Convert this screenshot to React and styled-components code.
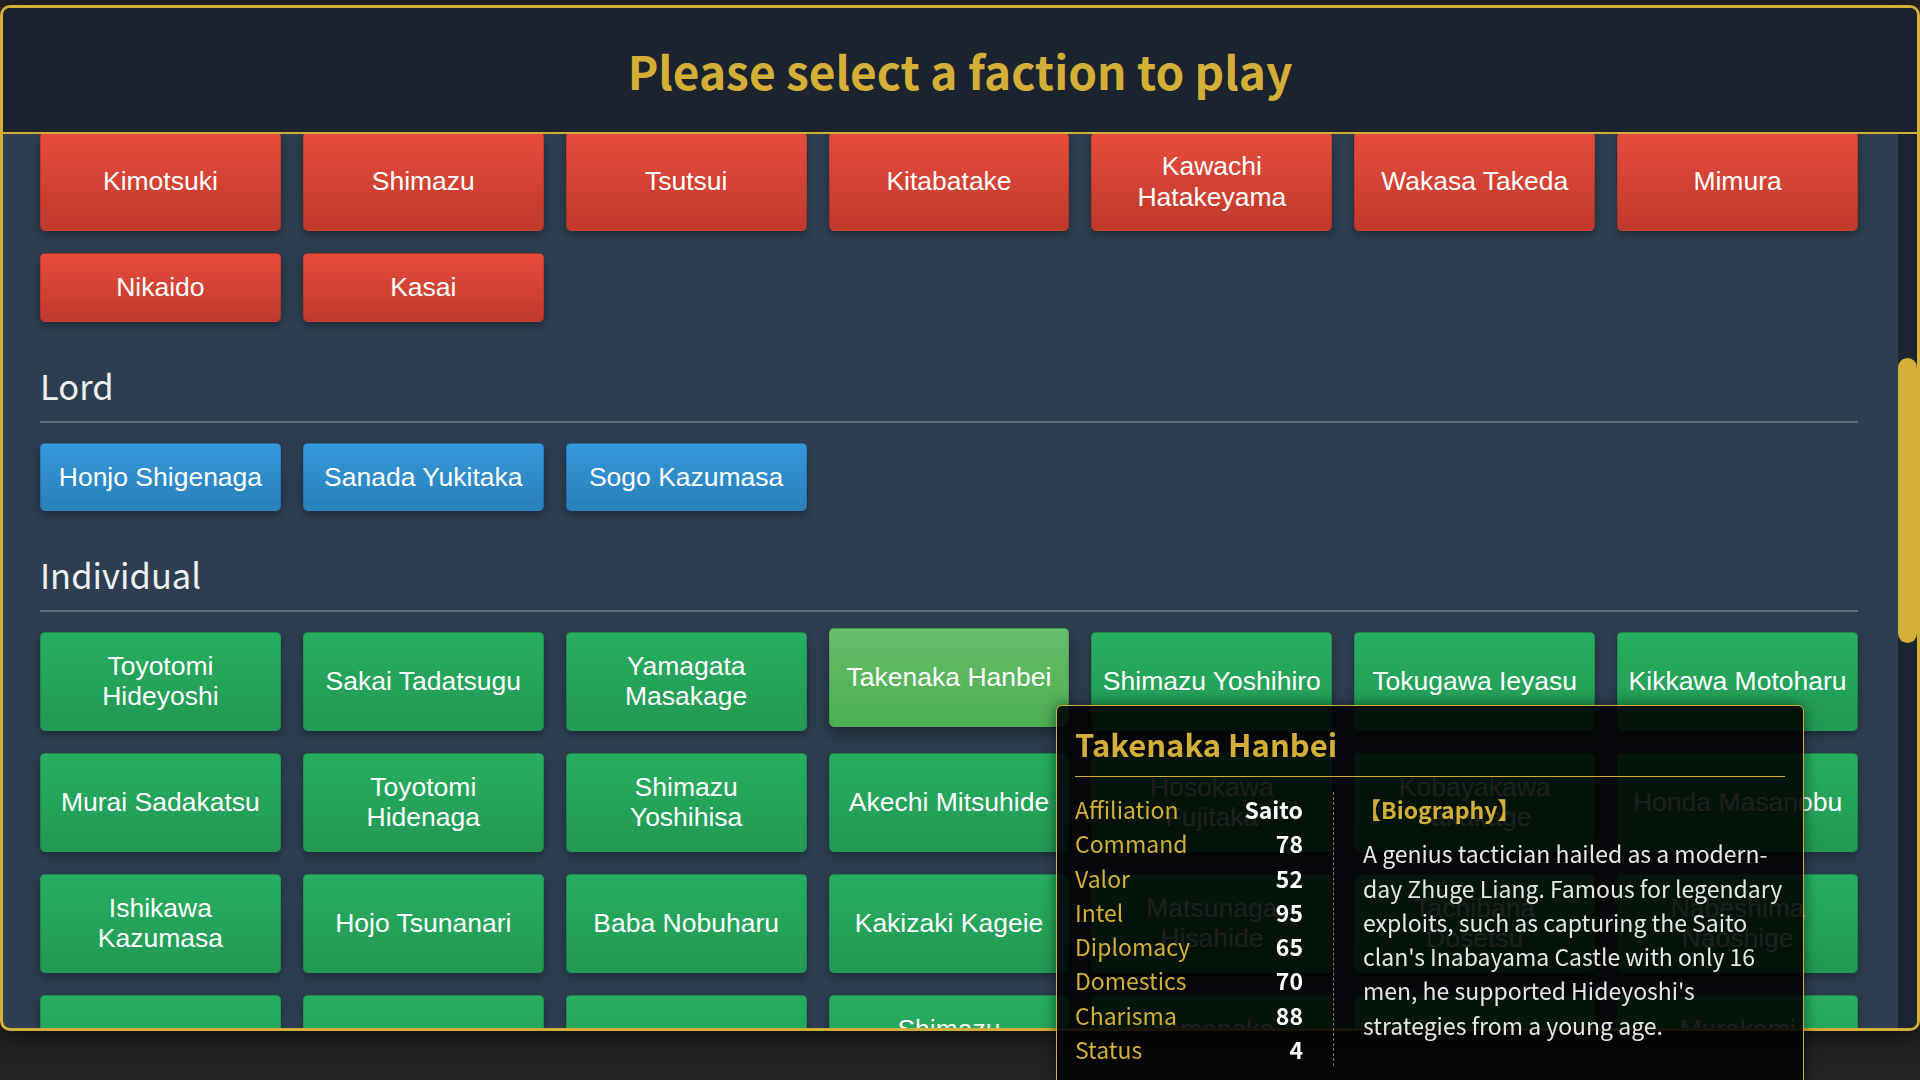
import React, { useLayoutEffect, useRef } from "react";
import styled, { createGlobalStyle, css } from "styled-components";

const GlobalStyle = createGlobalStyle`
  html, body {
    margin: 0;
    padding: 0;
    height: 100%;
    background: #232323;
    overflow: hidden;
  }
  body {
    font-family: "Noto Sans CJK JP", "Noto Sans", sans-serif;
  }
  * {
    box-sizing: border-box;
  }
`;

const hiddenClans = [
  "Oda", "Takeda", "Uesugi", "Hojo", "Mori", "Date", "Imagawa",
  "Tokugawa", "Asai", "Asakura", "Saito", "Rokkaku", "Miyoshi", "Matsunaga",
  "Chosokabe", "Otomo", "Ryuzoji", "Ashikaga", "Satake", "Satomi", "Mogami",
  "Ashina", "Nanbu", "Tsugaru", "Anegakoji", "Jinbo", "Hatano", "Akamatsu",
  "Amago", "Ouchi", "Ito", "Sagara", "Ichijo", "Kono", "Yamana",
];

const shownClans = [
  "Kimotsuki", "Shimazu", "Tsutsui", "Kitabatake", "Kawachi Hatakeyama",
  "Wakasa Takeda", "Mimura", "Nikaido", "Kasai",
];

const lords = ["Honjo Shigenaga", "Sanada Yukitaka", "Sogo Kazumasa"];

const individuals = [
  "Toyotomi Hideyoshi", "Sakai Tadatsugu", "Yamagata Masakage", "Takenaka Hanbei",
  "Shimazu Yoshihiro", "Tokugawa Ieyasu", "Kikkawa Motoharu",
  "Murai Sadakatsu", "Toyotomi Hidenaga", "Shimazu Yoshihisa", "Akechi Mitsuhide",
  "Hosokawa Fujitaka", "Kobayakawa Takakage", "Honda Masanobu",
  "Ishikawa Kazumasa", "Hojo Tsunanari", "Baba Nobuharu", "Kakizaki Kageie",
  "Matsunaga Hisahide", "Tachibana Dosetsu", "Nabeshima Naoshige",
  "Oda Nobunaga", "Takeda Shingen", "Uesugi Kenshin", "Shimazu Toshihisa",
  "Yamanaka Yukimori", "Date Masamune", "Murakami Yoshikiyo",
  "Maeda Toshiie", "Shibata Katsuie", "Niwa Nagahide", "Takigawa Kazumasu",
  "Sassa Narimasa", "Ikeda Tsuneoki", "Mori Nagayoshi",
  "Kato Kiyomasa", "Fukushima Masanori", "Ishida Mitsunari", "Otani Yoshitsugu",
  "Kuroda Kanbei", "Kuroda Nagamasa", "Hachisuka Masakatsu",
  "Sanada Masayuki", "Sanada Nobushige", "Naoe Kanetsugu", "Uesugi Kagekatsu",
  "Amakasu Kagemochi", "Saito Toshimitsu", "Saito Dosan",
];

const stats = [
  ["Affiliation", "Saito"],
  ["Command", "78"],
  ["Valor", "52"],
  ["Intel", "95"],
  ["Diplomacy", "65"],
  ["Domestics", "70"],
  ["Charisma", "88"],
  ["Status", "4"],
];

const gradients = {
  clan: css`
    background: linear-gradient(180deg, #e74c3c 0%, #c0392b 100%);
  `,
  lord: css`
    background: linear-gradient(180deg, #3498db 0%, #2980b9 100%);
  `,
  person: css`
    background: linear-gradient(180deg, #27ae60 0%, #229954 100%);
  `,
};

const App = () => {
  const scrollRef = useRef(null);
  const anchorRef = useRef(null);

  // the list is shown scrolled down to the end of the clan section
  useLayoutEffect(() => {
    if (scrollRef.current && anchorRef.current) {
      scrollRef.current.scrollTop = anchorRef.current.offsetTop + 2;
    }
  }, []);

  return (
    <>
      <GlobalStyle />
      <Frame>
        <Header>
          <Title>Please select a faction to play</Title>
        </Header>
        <Body>
          <Scroller ref={scrollRef}>
            <Section $first>
              <SectionTitle>Daimyo</SectionTitle>
              <Grid>
                {hiddenClans.map((name) => (
                  <FactionButton key={name} $kind="clan">
                    {name}
                  </FactionButton>
                ))}
                {shownClans.map((name, i) => (
                  <FactionButton
                    key={name}
                    $kind="clan"
                    ref={i === 0 ? anchorRef : undefined}
                  >
                    {name}
                  </FactionButton>
                ))}
              </Grid>
            </Section>
            <Section>
              <SectionTitle>Lord</SectionTitle>
              <Grid>
                {lords.map((name) => (
                  <FactionButton key={name} $kind="lord">
                    {name}
                  </FactionButton>
                ))}
              </Grid>
            </Section>
            <Section>
              <SectionTitle>Individual</SectionTitle>
              <Grid>
                {individuals.map((name) => (
                  <FactionButton
                    key={name}
                    $kind="person"
                    $active={name === "Takenaka Hanbei"}
                  >
                    {name}
                  </FactionButton>
                ))}
              </Grid>
            </Section>
          </Scroller>
          <ScrollTrack>
            <ScrollThumb />
          </ScrollTrack>
        </Body>
      </Frame>

      <Tooltip>
        <TipTitle>Takenaka Hanbei</TipTitle>
        <TipBody>
          <Stats>
            {stats.map(([label, value]) => (
              <StatRow key={label}>
                <StatLabel>{label}</StatLabel>
                <StatValue>{value}</StatValue>
              </StatRow>
            ))}
          </Stats>
          <Bio>
            <BioTitle>【Biography】</BioTitle>
            <BioText>
              A genius tactician hailed as a modern-day Zhuge Liang. Famous for
              legendary exploits, such as capturing the Saito clan's Inabayama
              Castle with only 16 men, he supported Hideyoshi's strategies from
              a young age.
            </BioText>
          </Bio>
        </TipBody>
      </Tooltip>
    </>
  );
};

const Frame = styled.div`
  margin-top: 5px;
  width: 1920px;
  height: 1026px;
  border: 3px solid #d4af37;
  border-radius: 10px;
  background: #2c3e50;
  overflow: hidden;
  display: flex;
  flex-direction: column;
  box-shadow: 0 6px 24px rgba(0, 0, 0, 0.55);
`;

const Header = styled.header`
  flex: none;
  background: #1b232e;
  border-bottom: 2px solid #d4af37;
  padding: 35px 0 34px;
  text-align: center;
`;

const Title = styled.h1`
  margin: 0;
  font-size: 46px;
  line-height: 55px;
  font-weight: 700;
  color: #d4af37;
`;

const Body = styled.div`
  flex: 1;
  min-height: 0;
  display: flex;
`;

const Scroller = styled.div`
  flex: 1;
  min-width: 0;
  position: relative;
  overflow: hidden;
  padding: 20px 40px 40px 37px;
`;

const ScrollTrack = styled.div`
  position: relative;
  flex: none;
  width: 19px;
  background: #1b2530;
`;

const ScrollThumb = styled.div`
  position: absolute;
  top: 224px;
  left: 0;
  width: 19px;
  height: 285px;
  border-radius: 10px;
  background: #d4af37;
`;

const Section = styled.section`
  margin-top: ${(p) => (p.$first ? "0" : "41px")};
`;

const SectionTitle = styled.h2`
  margin: 0 0 20px;
  padding-bottom: 14px;
  border-bottom: 2px solid #5d6d7e;
  font-size: 34.5px;
  line-height: 44px;
  font-weight: 400;
  color: #ecf0f1;
`;

const Grid = styled.div`
  display: grid;
  grid-template-columns: repeat(7, 1fr);
  gap: 22px;
`;

const FactionButton = styled.button`
  display: flex;
  align-items: center;
  justify-content: center;
  padding: 18px 10px;
  border: 1px solid rgba(0, 0, 0, 0.12);
  border-radius: 5px;
  font-family: "Liberation Sans", Arial, sans-serif;
  font-size: 26.5px;
  line-height: 1.149;
  color: #ffffff;
  text-align: center;
  cursor: pointer;
  box-shadow: 0 4px 8px rgba(0, 0, 0, 0.3);
  ${(p) => gradients[p.$kind]}
  ${(p) =>
    p.$active &&
    css`
      background: linear-gradient(180deg, #67bd6b 0%, #4caf50 100%);
      transform: translateY(-4px);
      box-shadow: 0 8px 14px rgba(0, 0, 0, 0.35);
    `}
`;

const Tooltip = styled.div`
  position: fixed;
  top: 705px;
  left: 1056px;
  width: 748px;
  padding: 19px 18px 20px;
  background: rgba(0, 0, 0, 0.88);
  border: 1px solid #d4af37;
  border-radius: 6px;
  box-shadow: 0 0 14px rgba(0, 0, 0, 0.5);
  font-family: "Noto Sans CJK JP", "Noto Sans", sans-serif;
`;

const TipTitle = styled.div`
  font-size: 31px;
  line-height: 38px;
  font-weight: 700;
  color: #d4af37;
  padding-bottom: 13px;
  border-bottom: 1px solid #d4af37;
`;

const TipBody = styled.div`
  display: grid;
  grid-template-columns: 259px 1fr;
  margin-top: 15px;
`;

const Stats = styled.div`
  padding-right: 30px;
  border-right: 1px dashed #8a735c;
`;

const StatRow = styled.div`
  display: flex;
  justify-content: space-between;
  font-size: 23px;
  line-height: 34.3px;
`;

const StatLabel = styled.span`
  color: #d4af37;
`;

const StatValue = styled.span`
  color: #ffffff;
  font-weight: 700;
`;

const Bio = styled.div`
  padding-left: 29px;
`;

const BioTitle = styled.div`
  margin: 0 0 10px -5px;
  font-size: 23px;
  line-height: 34.3px;
  font-weight: 700;
  color: #d4af37;
`;

const BioText = styled.p`
  margin: 0;
  font-size: 23px;
  line-height: 34.3px;
  color: #e6e6e6;
`;

export default App;
